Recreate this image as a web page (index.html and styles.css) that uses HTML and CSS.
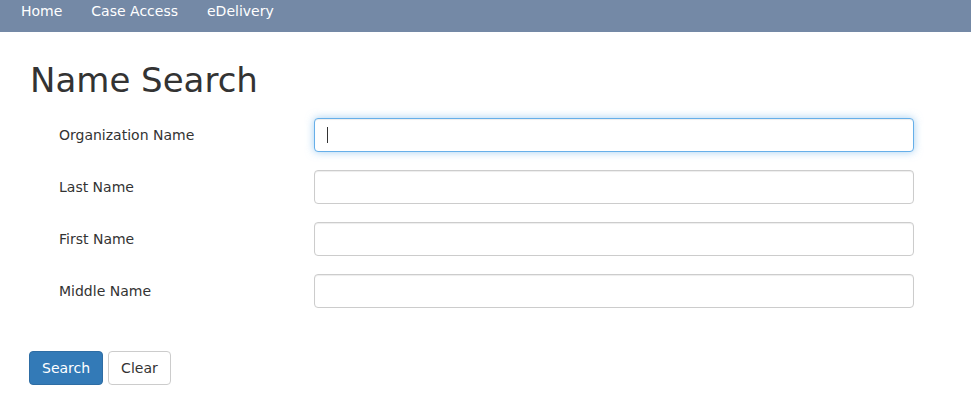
FILE: index.html
```html
<!DOCTYPE html>
<html lang="en">
<head>
    <meta charset="UTF-8">
    <title>Name Search</title>
    <link rel="stylesheet" href="styles.css">
</head>
<body>
    <nav class="navbar">
        <a href="#">Home</a>
        <a href="#">Case Access</a>
        <a href="#">eDelivery</a>
    </nav>

    <div class="container">
        <h1 class="page-title">Name Search</h1>

        <form class="search-form">
            <div class="form-row">
                <label for="org">Organization Name</label>
                <div class="input-wrap">
                    <input type="text" id="org" class="form-control focused">
                    <span class="caret"></span>
                </div>
            </div>
            <div class="form-row">
                <label for="last">Last Name</label>
                <input type="text" id="last" class="form-control">
            </div>
            <div class="form-row">
                <label for="first">First Name</label>
                <input type="text" id="first" class="form-control">
            </div>
            <div class="form-row">
                <label for="middle">Middle Name</label>
                <input type="text" id="middle" class="form-control">
            </div>

            <div class="actions">
                <button type="button" class="btn btn-primary">Search</button>
                <button type="reset" class="btn btn-default">Clear</button>
            </div>
        </form>
    </div>
</body>
</html>
```

FILE: styles.css
```css
* {
    margin: 0;
    padding: 0;
    box-sizing: border-box;
}

body {
    font-family: "DejaVu Sans", Verdana, sans-serif;
    font-size: 14px;
    color: #333;
    background: white;
}

.navbar {
    background-color: #7489a6;
    height: 32px;
    display: flex;
    align-items: center;
    padding-left: 21px;
    gap: 29px;
}

.navbar a {
    color: white;
    text-decoration: none;
    font-size: 14px;
    margin-top: -10px;
}

.container {
    padding: 0 29px;
}

.page-title {
    font-weight: normal;
    font-size: 34px;
    margin-top: 28px;
    line-height: 40px;
    margin-bottom: 18px;
    padding-left: 1px;
}

.form-row {
    display: flex;
    align-items: center;
    margin-bottom: 18px;
}

.form-row label {
    width: 285px;
    padding-left: 30px;
}

.input-wrap {
    position: relative;
}

.form-control {
    display: block;
    width: 600px;
    height: 34px;
    border: 1px solid #ccc;
    border-radius: 4px;
    padding: 6px 12px;
    font-size: 14px;
    font-family: inherit;
    color: #555;
    box-shadow: inset 0 1px 1px rgba(0,0,0,0.075);
    outline: none;
}

.form-control.focused,
.form-control:focus {
    border-color: #66afe9;
    box-shadow: inset 0 1px 1px rgba(0,0,0,0.075), 0 0 8px rgba(102,175,233,0.6);
}

.caret {
    position: absolute;
    left: 13px;
    top: 9px;
    width: 1px;
    height: 16px;
    background: #333;
}

.actions {
    margin-top: 43px;
    display: flex;
    gap: 5px;
}

.btn {
    height: 34px;
    padding: 6px 12px;
    font-size: 14px;
    font-family: inherit;
    border: 1px solid transparent;
    border-radius: 4px;
    cursor: pointer;
}

.btn-primary {
    background: #337ab7;
    border-color: #2e6da4;
    color: white;
}

.btn-default {
    background: white;
    border-color: #ccc;
    color: #333;
}
```
